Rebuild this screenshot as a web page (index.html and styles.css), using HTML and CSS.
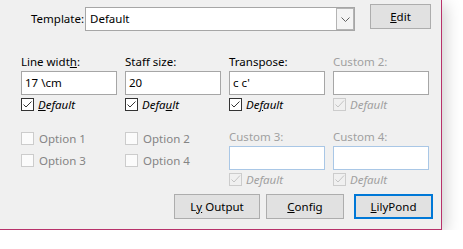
FILE: index.html
```html
<!DOCTYPE html>
<html lang="en">
<head>
	<meta charset="UTF-8">
	<title>LilyPond Options</title>
	<link rel="stylesheet" href="styles.css">
</head>
<body>
	<div class="window">
		<div class="template-row">
			<span class="template-label">Template:</span>
			<div class="combo">
				<span class="combo-text">Default</span>
				<span class="combo-button">
					<svg width="9" height="5" viewBox="0 0 9 5"><path d="M0.5 0.5 L4.5 4.5 L8.5 0.5" fill="none" stroke="#606060" stroke-width="1"/></svg>
				</span>
			</div>
			<div class="btn btn-edit"><span><u>E</u>dit</span></div>
		</div>

		<div class="fields">
			<div class="field">
				<div class="field-label">Line widt<u>h</u>:</div>
				<div class="input">17 \cm</div>
				<div class="check">
					<svg class="box" width="13" height="13" viewBox="0 0 13 13"><rect x="0.5" y="0.5" width="12" height="12" fill="#fff" stroke="#333"/><path d="M2.5 6.5 L5 9 L10.5 3.5" fill="none" stroke="#333"/></svg>
					<span class="check-text"><u>D</u>efault</span>
				</div>
			</div>
			<div class="field">
				<div class="field-label">Staff size:</div>
				<div class="input">20</div>
				<div class="check">
					<svg class="box" width="13" height="13" viewBox="0 0 13 13"><rect x="0.5" y="0.5" width="12" height="12" fill="#fff" stroke="#333"/><path d="M2.5 6.5 L5 9 L10.5 3.5" fill="none" stroke="#333"/></svg>
					<span class="check-text">Defa<u>u</u>lt</span>
				</div>
			</div>
			<div class="field">
				<div class="field-label">Transpose:</div>
				<div class="input">c c'</div>
				<div class="check">
					<svg class="box" width="13" height="13" viewBox="0 0 13 13"><rect x="0.5" y="0.5" width="12" height="12" fill="#fff" stroke="#333"/><path d="M2.5 6.5 L5 9 L10.5 3.5" fill="none" stroke="#333"/></svg>
					<span class="check-text">De<u>f</u>ault</span>
				</div>
			</div>
			<div class="field disabled">
				<div class="field-label">Custom 2:</div>
				<div class="input"></div>
				<div class="check">
					<svg class="box" width="13" height="13" viewBox="0 0 13 13"><rect x="0.5" y="0.5" width="12" height="12" fill="#f0f0f0" stroke="#cccccc"/><path d="M2.5 6.5 L5 9 L11 2.5" fill="none" stroke="#c4c4c4"/></svg>
					<span class="check-text">Default</span>
				</div>
			</div>
		</div>

		<div class="extras">
			<div class="options">
				<div class="option">
					<svg class="box" width="13" height="13" viewBox="0 0 13 13"><rect x="0.5" y="0.5" width="12" height="12" fill="#fbfbfb" stroke="#cccccc"/></svg>
					<span>Option 1</span>
				</div>
				<div class="option">
					<svg class="box" width="13" height="13" viewBox="0 0 13 13"><rect x="0.5" y="0.5" width="12" height="12" fill="#fbfbfb" stroke="#cccccc"/></svg>
					<span>Option 3</span>
				</div>
			</div>
			<div class="options">
				<div class="option">
					<svg class="box" width="13" height="13" viewBox="0 0 13 13"><rect x="0.5" y="0.5" width="12" height="12" fill="#fbfbfb" stroke="#cccccc"/></svg>
					<span>Option 2</span>
				</div>
				<div class="option">
					<svg class="box" width="13" height="13" viewBox="0 0 13 13"><rect x="0.5" y="0.5" width="12" height="12" fill="#fbfbfb" stroke="#cccccc"/></svg>
					<span>Option 4</span>
				</div>
			</div>
			<div class="field disabled">
				<div class="field-label">Custom 3:</div>
				<div class="input input-hover"></div>
				<div class="check">
					<svg class="box" width="13" height="13" viewBox="0 0 13 13"><rect x="0.5" y="0.5" width="12" height="12" fill="#f0f0f0" stroke="#cccccc"/><path d="M2.5 6.5 L5 9 L11 2.5" fill="none" stroke="#c4c4c4"/></svg>
					<span class="check-text">Default</span>
				</div>
			</div>
			<div class="field disabled">
				<div class="field-label">Custom 4:</div>
				<div class="input input-hover"></div>
				<div class="check">
					<svg class="box" width="13" height="13" viewBox="0 0 13 13"><rect x="0.5" y="0.5" width="12" height="12" fill="#f0f0f0" stroke="#cccccc"/><path d="M2.5 6.5 L5 9 L11 2.5" fill="none" stroke="#c4c4c4"/></svg>
					<span class="check-text">Default</span>
				</div>
			</div>
		</div>

		<div class="buttons">
			<div class="btn btn-ly"><span>L<u>y</u> Output</span></div>
			<div class="btn btn-config"><span><u>C</u>onfig</span></div>
			<div class="btn btn-default"><span><u>L</u>ilyPond</span></div>
		</div>
	</div>
</body>
</html>
```

FILE: styles.css
```css
body {
	margin: 0;
	background: #fff;
	font-family: "Noto Sans", "Open Sans", sans-serif;
	font-size: 11.5px;
	color: #000;
}
.window {
	box-sizing: border-box;
	width: 442px;
	height: 230px;
	background: #f0f0f0;
	border-right: 1px solid #b8326a;
	border-bottom: 1px solid #b8326a;
	box-shadow: 3px 4px 16px rgba(0, 0, 0, 0.2);
	padding-left: 21px;
}
.template-row {
	display: flex;
	align-items: flex-start;
	padding-top: 4px;
	padding-left: 10px;
}
.template-label {
	line-height: 16px;
	margin-top: 7px;
	width: 54px;
}
.combo {
	box-sizing: border-box;
	display: flex;
	width: 270px;
	height: 24px;
	margin-top: 3px;
	background: #fff;
	border: 1px solid #a6a6a6;
}
.combo-text {
	flex: 1;
	padding-left: 4px;
	line-height: 21px;
}
.combo-button {
	box-sizing: border-box;
	width: 18px;
	border: 1px solid #b4b4b4;
	background: #f4f4f4;
	display: flex;
	align-items: center;
	justify-content: center;
}
.btn {
	box-sizing: border-box;
	height: 25px;
	background: #e1e1e1;
	border: 1px solid #adadad;
	display: flex;
	align-items: center;
	justify-content: center;
	padding-bottom: 1px;
}
.btn-edit {
	width: 61px;
	margin-left: 15px;
}
.fields,
.extras {
	display: grid;
	grid-template-columns: repeat(4, 96px);
	column-gap: 8px;
}
.fields {
	margin-top: 23px;
}
.extras {
	margin-top: 17px;
}
.field-label {
	line-height: 16px;
	height: 16px;
	margin-bottom: 1px;
}
.input {
	box-sizing: border-box;
	height: 24px;
	background: #fff;
	border: 1px solid #a6a6a6;
	padding-left: 3px;
	line-height: 21px;
}
.input-hover {
	border-color: #a9c7e6;
}
.check,
.option {
	display: flex;
	align-items: center;
	height: 16px;
}
.check {
	margin-top: 1px;
}
.box {
	flex: none;
	margin-right: 4px;
}
.check-text {
	font-style: italic;
}
.option {
	margin-top: 1px;
	margin-bottom: 6px;
	color: #848484;
}
.option .box {
	margin-right: 5px;
}
.disabled {
	color: #a0a0a0;
}
.buttons {
	display: flex;
	justify-content: flex-end;
	margin-top: 7px;
	padding-right: 8px;
}
.btn-ly {
	width: 86px;
}
.btn-config {
	width: 78px;
	margin-left: 6px;
}
.btn-default {
	width: 79px;
	margin-left: 10px;
	border: 2px solid #0078d7;
}
```
